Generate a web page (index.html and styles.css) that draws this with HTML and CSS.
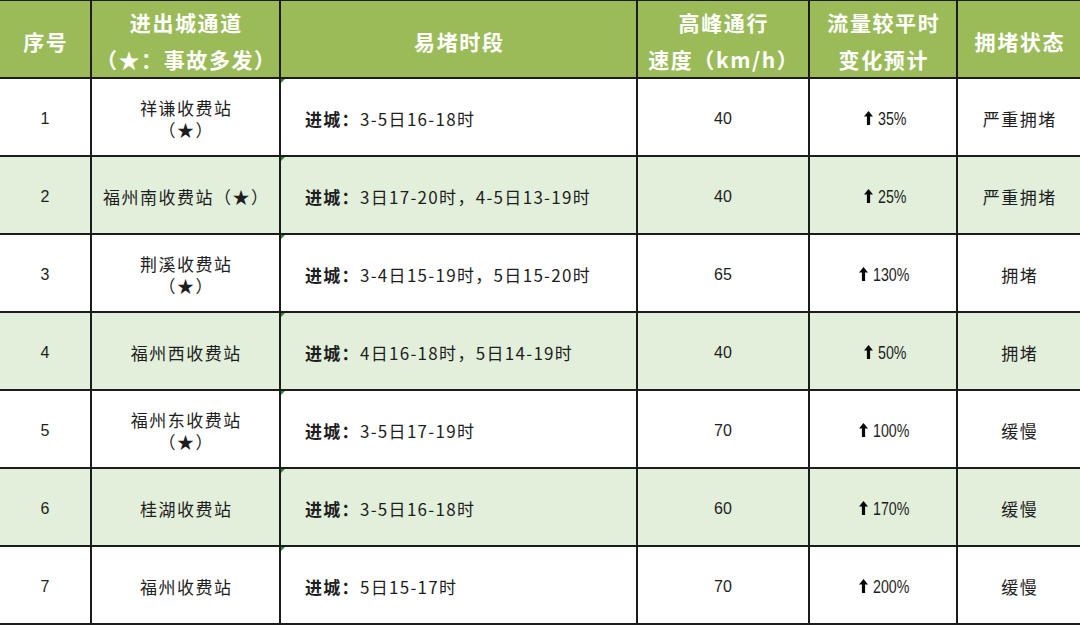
FILE: index.html
```html
<!DOCTYPE html>
<html lang="zh-CN">
<head>
<meta charset="utf-8">
<title>进出城通道拥堵预测</title>
<link rel="stylesheet" href="styles.css">
</head>
<body>
<div class="table">
  <div class="cell head">序号</div>
  <div class="cell head">进出城通道<br>（★：事故多发）</div>
  <div class="cell head">易堵时段</div>
  <div class="cell head">高峰通行<br>速度（km/h）</div>
  <div class="cell head">流量较平时<br>变化预计</div>
  <div class="cell head">拥堵状态</div>

  <div class="cell num">1</div>
  <div class="cell name">祥谦收费站<br>（★）</div>
  <div class="cell time"><b>进城：</b>3-5日16-18时</div>
  <div class="cell num">40</div>
  <div class="cell pct"><svg class="arrow" viewBox="0 0 9 14"><path d="M4.5 0 L9 5.6 L6.1 5.6 L6.1 14 L2.9 14 L2.9 5.6 L0 5.6 Z"/></svg><span class="pv">35%</span></div>
  <div class="cell name">严重拥堵</div>

  <div class="cell num alt">2</div>
  <div class="cell name alt">福州南收费站（★）</div>
  <div class="cell time alt"><b>进城：</b>3日17-20时，4-5日13-19时</div>
  <div class="cell num alt">40</div>
  <div class="cell pct alt"><svg class="arrow" viewBox="0 0 9 14"><path d="M4.5 0 L9 5.6 L6.1 5.6 L6.1 14 L2.9 14 L2.9 5.6 L0 5.6 Z"/></svg><span class="pv">25%</span></div>
  <div class="cell name alt">严重拥堵</div>

  <div class="cell num">3</div>
  <div class="cell name">荆溪收费站<br>（★）</div>
  <div class="cell time"><b>进城：</b>3-4日15-19时，5日15-20时</div>
  <div class="cell num">65</div>
  <div class="cell pct"><svg class="arrow" viewBox="0 0 9 14"><path d="M4.5 0 L9 5.6 L6.1 5.6 L6.1 14 L2.9 14 L2.9 5.6 L0 5.6 Z"/></svg><span class="pv">130%</span></div>
  <div class="cell name">拥堵</div>

  <div class="cell num alt">4</div>
  <div class="cell name alt">福州西收费站</div>
  <div class="cell time alt"><b>进城：</b>4日16-18时，5日14-19时</div>
  <div class="cell num alt">40</div>
  <div class="cell pct alt"><svg class="arrow" viewBox="0 0 9 14"><path d="M4.5 0 L9 5.6 L6.1 5.6 L6.1 14 L2.9 14 L2.9 5.6 L0 5.6 Z"/></svg><span class="pv">50%</span></div>
  <div class="cell name alt">拥堵</div>

  <div class="cell num">5</div>
  <div class="cell name">福州东收费站<br>（★）</div>
  <div class="cell time"><b>进城：</b>3-5日17-19时</div>
  <div class="cell num">70</div>
  <div class="cell pct"><svg class="arrow" viewBox="0 0 9 14"><path d="M4.5 0 L9 5.6 L6.1 5.6 L6.1 14 L2.9 14 L2.9 5.6 L0 5.6 Z"/></svg><span class="pv">100%</span></div>
  <div class="cell name">缓慢</div>

  <div class="cell num alt">6</div>
  <div class="cell name alt">桂湖收费站</div>
  <div class="cell time alt"><b>进城：</b>3-5日16-18时</div>
  <div class="cell num alt">60</div>
  <div class="cell pct alt"><svg class="arrow" viewBox="0 0 9 14"><path d="M4.5 0 L9 5.6 L6.1 5.6 L6.1 14 L2.9 14 L2.9 5.6 L0 5.6 Z"/></svg><span class="pv">170%</span></div>
  <div class="cell name alt">缓慢</div>

  <div class="cell num">7</div>
  <div class="cell name">福州收费站</div>
  <div class="cell time"><b>进城：</b>5日15-17时</div>
  <div class="cell num">70</div>
  <div class="cell pct"><svg class="arrow" viewBox="0 0 9 14"><path d="M4.5 0 L9 5.6 L6.1 5.6 L6.1 14 L2.9 14 L2.9 5.6 L0 5.6 Z"/></svg><span class="pv">200%</span></div>
  <div class="cell name">缓慢</div>
</div>
</body>
</html>
```

FILE: styles.css
```css
html, body {
  margin: 0;
  padding: 0;
  background: #ffffff;
}

.table {
  display: grid;
  grid-template-columns: 90px 187px 355px 170px 146px 122px;
  grid-template-rows: 76px repeat(7, 76px);
  gap: 2px;
  background: #1c1c1c;
  border-top: 1px solid #1c1c1c;
  border-bottom: 2px solid #1c1c1c;
  width: 1080px;
  font-family: "Noto Sans CJK SC", "Liberation Sans", sans-serif;
  color: #1e1e1e;
}

.cell {
  background: #ffffff;
  display: flex;
  align-items: center;
  justify-content: center;
  text-align: center;
  font-size: 17px;
  line-height: 22px;
  padding-top: 3px;
  box-sizing: border-box;
  position: relative;
}

.cell.alt {
  background: #e2efda;
}

.head {
  background: #9bbb59;
  color: #ffffff;
  font-weight: bold;
  font-size: 21px;
  line-height: 37px;
  letter-spacing: 1.6px;
  padding-top: 4px;
  padding-left: 1.6px;
}

.num {
  font-family: "Liberation Sans", "Noto Sans CJK SC", sans-serif;
  font-size: 16px;
}

.name {
  letter-spacing: 1.5px;
  padding-left: 1.5px;
}

.time {
  justify-content: flex-start;
  padding-left: 24px;
  font-size: 17px;
  letter-spacing: 1.3px;
}

.time b {
  font-weight: bold;
}

.time::before {
  content: "";
  position: absolute;
  left: 0;
  top: 0;
  border-top: 4px solid #2e8b2e;
  border-right: 4px solid transparent;
}

.pct {
  gap: 5px;
  padding-left: 4px;
}

.arrow {
  width: 9px;
  height: 14px;
  fill: #0a0a0a;
  flex-shrink: 0;
  margin-top: -1px;
}

.pv {
  display: inline-block;
  font-family: "Liberation Sans", sans-serif;
  font-size: 18px;
  transform: scaleX(0.79);
  transform-origin: left center;
  margin-right: -9px;
}
```
